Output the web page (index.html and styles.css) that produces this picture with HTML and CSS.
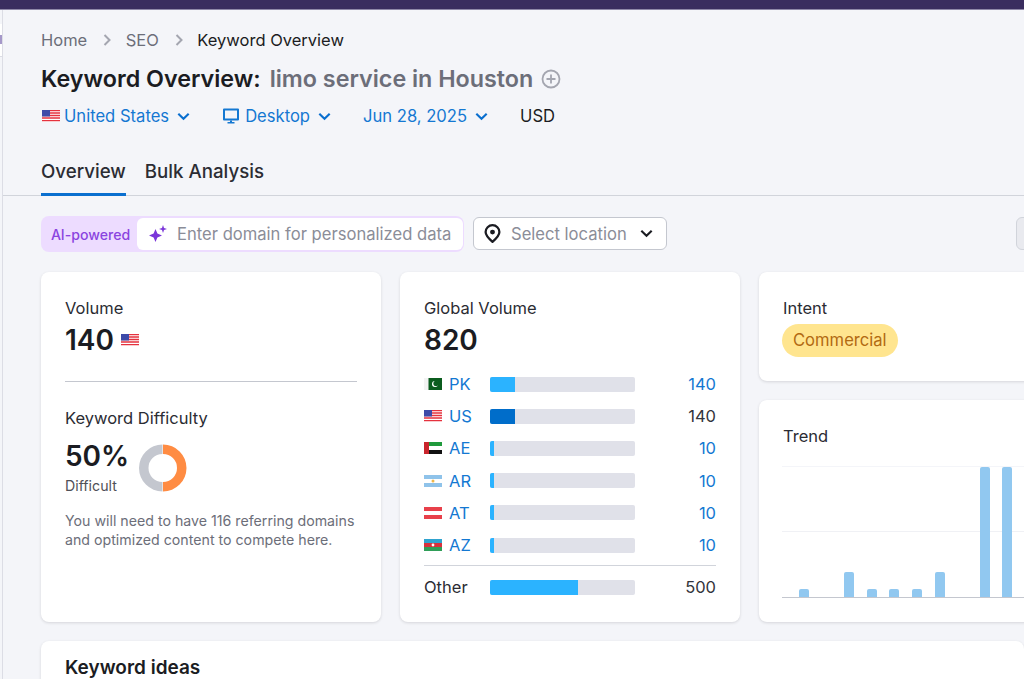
FILE: index.html
```html
<!DOCTYPE html>
<html lang="en">
<head>
    <meta charset="UTF-8">
    <meta name="viewport" content="width=device-width, initial-scale=1.0">
    <title>Keyword Overview</title>
    <link rel="stylesheet" href="styles.css">
</head>
<body>
    <div class="topbar"></div>
    <div class="layout">
        <div class="sidebar"><div class="side-tab"><div class="side-mark"></div></div></div>
        <div class="main">
            <header class="page-head">
                <nav class="crumbs">
                    <span>Home</span>
                    <svg class="crumb-sep" viewBox="0 0 10 14"><path d="M2.5 2l5 5-5 5" fill="none" stroke="currentColor" stroke-width="2"/></svg>
                    <span>SEO</span>
                    <svg class="crumb-sep" viewBox="0 0 10 14"><path d="M2.5 2l5 5-5 5" fill="none" stroke="currentColor" stroke-width="2"/></svg>
                    <span class="crumb-current">Keyword Overview</span>
                </nav>
                <h1 class="title">Keyword Overview: <span class="title-kw">limo service in Houston</span>
                    <svg class="title-add" viewBox="0 0 20 20"><circle cx="10" cy="10" r="8.5" fill="none" stroke="currentColor" stroke-width="1.8"/><path d="M10 5.5v9M5.5 10h9" stroke="currentColor" stroke-width="1.8"/></svg>
                </h1>
                <div class="filters">
                    <span class="filter">
                        <svg class="flag" viewBox="0 0 18 12"><use href="#flag-us"/></svg>
                        United States
                        <svg class="chev" viewBox="0 0 12 8"><path d="M1.2 1.5L6 6l4.8-4.5" fill="none" stroke="currentColor" stroke-width="2"/></svg>
                    </span>
                    <span class="filter">
                        <svg class="desktop" viewBox="0 0 18 18"><path d="M2 1.500h14a1 1 0 0 1 1 1v10a1 1 0 0 1-1 1H2a1 1 0 0 1-1-1v-10a1 1 0 0 1 1-1zm1 2v8h12v-8H3z" fill="currentColor" fill-rule="evenodd"/><path d="M8 13.500h2v1.500h2.500v1.500h-7V15H8z" fill="currentColor"/></svg>
                        Desktop
                        <svg class="chev" viewBox="0 0 12 8"><path d="M1.2 1.5L6 6l4.8-4.5" fill="none" stroke="currentColor" stroke-width="2"/></svg>
                    </span>
                    <span class="filter">
                        Jun 28, 2025
                        <svg class="chev" viewBox="0 0 12 8"><path d="M1.2 1.5L6 6l4.8-4.5" fill="none" stroke="currentColor" stroke-width="2"/></svg>
                    </span>
                    <span class="currency">USD</span>
                </div>
                <div class="tabs">
                    <span class="tab tab-active">Overview</span>
                    <span class="tab">Bulk Analysis</span>
                </div>
            </header>

            <div class="toolbar">
                <div class="ai-box">
                    <span class="ai-label">AI-powered</span>
                    <div class="ai-input">
                        <svg class="sparkle" viewBox="0 0 18 18"><path d="M6.500 4l1.900 4.600L13 10.500l-4.600 1.900L6.500 17l-1.900-4.600L0 10.500l4.600-1.900z" fill="#7b36d9"/><path d="M14 0l1 3 3 1-3 1-1 3-1-3-3-1 3-1z" fill="#7b36d9"/></svg>
                        <span>Enter domain for personalized data</span>
                    </div>
                </div>
                <div class="location">
                    <svg class="pin" viewBox="0 0 18 20"><path d="M9 1.200a7.300 7.300 0 0 1 7.300 7.300c0 3.600-3 6.700-7.300 10.300C4.700 15.200 1.700 12.100 1.700 8.500A7.300 7.300 0 0 1 9 1.200z" fill="none" stroke="#1b1c22" stroke-width="2.400"/><circle cx="9" cy="8.500" r="2.600" fill="#1b1c22"/></svg>
                    <span>Select location</span>
                    <svg class="chev chev-dark" viewBox="0 0 12 8"><path d="M1.2 1.500L6 6l4.800-4.500" fill="none" stroke="currentColor" stroke-width="2"/></svg>
                </div>
                <div class="toolbar-btn"></div>
            </div>

            <div class="cards">
                <section class="card card-volume">
                    <div class="label">Volume</div>
                    <div class="big">140 <svg class="flag" viewBox="0 0 18 12"><use href="#flag-us"/></svg></div>
                    <hr class="rule">
                    <div class="label kd-label">Keyword Difficulty</div>
                    <div class="kd-row">
                        <div>
                            <div class="big">50%</div>
                            <div class="kd-level">Difficult</div>
                        </div>
                        <svg class="donut" viewBox="0 0 48 48">
                            <path d="M23.500 0.500a23.500 23.500 0 0 0 0 47v-9.500a14 14 0 0 1 0-28z" fill="#c4c7cf"/>
                            <path d="M24 0.500a23.500 23.500 0 0 1 0 47v-9.500a14 14 0 0 0 0-28z" fill="#ff8c43"/>
                        </svg>
                    </div>
                    <p class="kd-note">You will need to have 116 referring domains and optimized content to compete here.</p>
                </section>

                <section class="card card-global">
                    <div class="label">Global Volume</div>
                    <div class="big">820</div>
                    <div class="countries">
                        <div class="country">
                            <svg class="flag" viewBox="0 0 18 12"><rect width="18" height="12" fill="#0b5c1e"/><rect width="4.500" height="12" fill="#f3f3f3"/><circle cx="11" cy="6" r="3" fill="#fff"/><circle cx="12" cy="5.400" r="2.600" fill="#0b5c1e"/></svg>
                            <span class="code">PK</span>
                            <span class="bar"><span class="fill" style="width: 17%"></span></span>
                            <span class="num">140</span>
                        </div>
                        <div class="country">
                            <svg class="flag" viewBox="0 0 18 12"><use href="#flag-us"/></svg>
                            <span class="code">US</span>
                            <span class="bar"><span class="fill fill-dark" style="width: 17%"></span></span>
                            <span class="num num-plain">140</span>
                        </div>
                        <div class="country">
                            <svg class="flag" viewBox="0 0 18 12"><rect width="18" height="4" fill="#1f9a3c"/><rect y="4" width="18" height="4" fill="#fff"/><rect y="8" width="18" height="4" fill="#111"/><rect width="5" height="12" fill="#c9252c"/></svg>
                            <span class="code">AE</span>
                            <span class="bar"><span class="fill" style="width: 3%"></span></span>
                            <span class="num">10</span>
                        </div>
                        <div class="country">
                            <svg class="flag" viewBox="0 0 18 12"><rect width="18" height="12" fill="#fff"/><rect width="18" height="4" fill="#8fc3ea"/><rect y="8" width="18" height="4" fill="#8fc3ea"/><circle cx="9" cy="6" r="1.500" fill="#eeb84a"/></svg>
                            <span class="code">AR</span>
                            <span class="bar"><span class="fill" style="width: 3%"></span></span>
                            <span class="num">10</span>
                        </div>
                        <div class="country">
                            <svg class="flag" viewBox="0 0 18 12"><rect width="18" height="12" fill="#e8404a"/><rect y="4" width="18" height="4" fill="#fff"/></svg>
                            <span class="code">AT</span>
                            <span class="bar"><span class="fill" style="width: 3%"></span></span>
                            <span class="num">10</span>
                        </div>
                        <div class="country">
                            <svg class="flag" viewBox="0 0 18 12"><rect width="18" height="4" fill="#2fa3cf"/><rect y="4" width="18" height="4" fill="#d8303c"/><rect y="8" width="18" height="4" fill="#2f9e58"/><circle cx="9" cy="6" r="1.400" fill="#fff"/></svg>
                            <span class="code">AZ</span>
                            <span class="bar"><span class="fill" style="width: 3%"></span></span>
                            <span class="num">10</span>
                        </div>
                    </div>
                    <div class="country country-other">
                        <span class="other-name">Other</span>
                        <span class="bar"><span class="fill" style="width: 61%"></span></span>
                        <span class="num num-plain">500</span>
                    </div>
                </section>

                <div class="card-stack">
                    <section class="card card-intent">
                        <div class="label">Intent</div>
                        <span class="intent-pill">Commercial</span>
                    </section>
                    <section class="card card-trend">
                        <div class="label">Trend</div>
                        <div class="chart">
                            <div class="chart-line"></div>
                            <div class="chart-bars">
                                <span class="chart-bar" style="height: 8px"></span>
                                <span class="chart-bar" style="height: 0"></span>
                                <span class="chart-bar" style="height: 25px"></span>
                                <span class="chart-bar" style="height: 8px"></span>
                                <span class="chart-bar" style="height: 8px"></span>
                                <span class="chart-bar" style="height: 8px"></span>
                                <span class="chart-bar" style="height: 25px"></span>
                                <span class="chart-bar" style="height: 0"></span>
                                <span class="chart-bar" style="height: 130px"></span>
                                <span class="chart-bar" style="height: 130px"></span>
                            </div>
                        </div>
                    </section>
                </div>
            </div>

            <section class="card card-ideas">
                <h2 class="ideas-title">Keyword ideas</h2>
            </section>
        </div>
    </div>

    <svg class="defs" width="0" height="0">
        <defs>
            <g id="flag-us">
                <rect width="18" height="12" fill="#fff"/>
                <path d="M0 .5h18M0 3h18M0 5.500h18M0 8h18M0 10.700h18" stroke="#e5323e" stroke-width="1.300"/>
                <rect width="8" height="6.500" fill="#3d4aa8"/>
            </g>
        </defs>
    </svg>
</body>
</html>
```

FILE: styles.css
```css
html, body {
    margin: 0;
    height: 679px;
    overflow: hidden;
}
body {
    font-family: Inter, "Liberation Sans", sans-serif;
    background-color: #f4f5f9;
    color: #1b1c22;
}
.defs {
    display: block;
    height: 0;
}
.topbar {
    height: 9px;
    background-color: #3a2d5f;
    border-bottom: 1px solid #8f88a8;
}
.layout {
    display: flex;
    height: 669px;
    overflow: hidden;
}
.sidebar {
    width: 2px;
    flex: none;
    border-right: 1px solid #dcdde5;
    background-color: #f4f5f9;
}
.side-tab {
    height: 33px;
    margin-top: 14px;
    padding-top: 11px;
    box-sizing: border-box;
    background-color: #fff;
    border-bottom: 1px solid #dcdde5;
}
.side-mark {
    height: 9px;
    background-color: #a598c9;
}
.main {
    flex: none;
    width: 1021px;
}

/* header */
.page-head {
    padding: 19px 0 0 38px;
    border-bottom: 1px solid #d1d4db;
}
.crumbs {
    display: flex;
    align-items: center;
    font-size: 16.5px;
    line-height: 22px;
    color: #6c6e79;
}
.crumb-sep {
    width: 10px;
    height: 14px;
    margin: 0 13.5px 0 15px;
    color: #a4a6b0;
}
.crumb-current {
    color: #1b1c22;
}
.title {
    margin: 12px 0 0;
    font-size: 23.3px;
    line-height: 32px;
    font-weight: 600;
    display: flex;
    align-items: center;
    white-space: pre;
}
.title-kw {
    color: #6c6e79;
    margin-left: 3px;
}
.title-add {
    width: 20px;
    height: 20px;
    margin-left: 8px;
    color: #a4a6b0;
}
.filters {
    display: flex;
    align-items: center;
    margin-top: 9px;
    font-size: 16.6px;
    line-height: 24px;
    color: #1478d2;
}
.filter {
    display: flex;
    align-items: center;
    margin-right: 32px;
}
.flag {
    width: 18px;
    height: 12px;
    flex: none;
}
.filter .flag {
    margin: 0 4px 0 1px;
}
.desktop {
    width: 18px;
    height: 18px;
    margin-right: 5px;
}
.chev {
    width: 13px;
    height: 9px;
    margin-left: 8px;
    color: #0a6fcf;
}
.chev-dark {
    color: #1b1c22;
    margin-left: 13px;
}
.currency {
    color: #1b1c22;
}
.tabs {
    display: flex;
    gap: 19px;
    margin-top: 32px;
}
.tab {
    font-size: 18.7px;
    line-height: 24px;
    font-weight: 500;
    color: #2b2c33;
    padding-bottom: 9px;
    margin-bottom: -1px;
    border-bottom: 3px solid transparent;
}
.tab-active {
    border-bottom-color: #0a6fcf;
}

/* toolbar */
.toolbar {
    display: flex;
    align-items: flex-start;
    gap: 9px;
    padding-left: 38px;
    margin-top: 20px;
    height: 36px;
}
.ai-box {
    display: flex;
    align-items: center;
    flex: none;
    width: 423px;
    height: 36px;
    box-sizing: border-box;
    padding: 2px 1px 2px 0;
    background-color: #eddcff;
    border-radius: 8px;
}
.ai-label {
    width: 96px;
    flex: none;
    box-sizing: border-box;
    padding-left: 3px;
    text-align: center;
    font-size: 14.1px;
    font-weight: 500;
    color: #8a44e0;
}
.ai-input {
    flex: 1;
    display: flex;
    align-items: center;
    height: 32px;
    background-color: #fff;
    border-radius: 6px;
    font-size: 16.6px;
    color: #8b8d98;
    white-space: nowrap;
}
.sparkle {
    width: 18px;
    height: 18px;
    margin: 0 10px 0 12px;
}
.location {
    display: flex;
    align-items: center;
    flex: none;
    width: 194px;
    height: 33px;
    margin-top: 1px;
    box-sizing: border-box;
    padding-left: 10px;
    background-color: #fff;
    border: 1px solid #c4c7cf;
    border-radius: 6px;
    font-size: 16.6px;
    color: #8b8d98;
}
.pin {
    width: 17px;
    height: 19px;
    margin-right: 10px;
}
.toolbar-btn {
    width: 40px;
    height: 33px;
    margin-top: 1px;
    box-sizing: border-box;
    margin-left: 340px;
    flex: none;
    background-color: #e9eaef;
    border: 1px solid #d1d4db;
    border-radius: 6px;
}

/* cards */
.cards {
    display: grid;
    grid-template-columns: 340px 340px 340px;
    gap: 19px;
    padding-left: 38px;
    margin-top: 20px;
}
.card {
    background-color: #fff;
    border-radius: 8px;
    box-shadow: 0 1px 3px rgba(27, 28, 34, 0.14);
    box-sizing: border-box;
}
.card-volume, .card-global {
    height: 350px;
    padding: 25px 24px 0;
}
.label {
    font-size: 16.5px;
    line-height: 22px;
    color: #2b2c33;
}
.big {
    display: flex;
    align-items: center;
    gap: 7px;
    margin-top: 3px;
    font-size: 28px;
    line-height: 36px;
    font-weight: 600;
}
.rule {
    margin: 23px 0 0;
    border: none;
    border-top: 1px solid #c4c7cf;
}
.kd-label {
    margin-top: 25px;
}
.kd-row {
    display: flex;
    align-items: flex-start;
    gap: 10px;
    margin-top: 6px;
}
.kd-level {
    font-size: 14.2px;
    line-height: 20px;
    color: #4f5058;
    margin-top: 2px;
}
.donut {
    width: 48px;
    height: 48px;
    margin-top: 9px;
}
.kd-note {
    margin: 15px 0 0;
    font-size: 14.2px;
    line-height: 19px;
    color: #6c6e79;
}
.countries {
    margin-top: 10px;
    padding-bottom: 4px;
    border-bottom: 1px solid #d1d4db;
}
.country {
    display: flex;
    align-items: center;
    height: 32.2px;
    font-size: 16.5px;
}
.code {
    width: 41px;
    flex: none;
    margin-left: 7px;
    color: #1478d2;
}
.bar {
    width: 145px;
    height: 15px;
    flex: none;
    background-color: #e0e1e9;
    border-radius: 2px;
    overflow: hidden;
}
.fill {
    display: block;
    height: 100%;
    background-color: #2bb3ff;
}
.fill-dark {
    background-color: #006dca;
}
.num {
    flex: 1;
    text-align: right;
    color: #1478d2;
}
.num-plain {
    color: #33343c;
}
.country-other {
    margin-top: 5px;
}
.other-name {
    width: 66px;
    flex: none;
    color: #2b2c33;
}
.card-stack {
    display: flex;
    flex-direction: column;
    gap: 19px;
}
.card-intent {
    height: 109px;
    padding: 25px 24px 0;
}
.intent-pill {
    display: inline-block;
    margin: 5px 0 0 -1px;
    padding: 0 11px;
    font-size: 16.6px;
    line-height: 33px;
    color: #b26a12;
    background-color: #ffe58f;
    border-radius: 17px;
}
.card-trend {
    height: 222px;
    padding: 25px 24px 0;
}
.chart {
    position: relative;
    height: 130px;
    margin: 19px 0 0 -1px;
    border-top: 1px solid #f4f5f9;
    border-bottom: 1px solid #c4c7cf;
}
.chart-line {
    position: absolute;
    left: 0;
    right: 0;
    top: 64px;
    border-top: 1px solid #f0f1f5;
}
.chart-bars {
    position: relative;
    display: flex;
    align-items: flex-end;
    gap: 12.6px;
    height: 100%;
    padding-left: 17px;
}
.chart-bar {
    width: 10px;
    background-color: #91c8f0;
    border-radius: 2px 2px 0 0;
}
.card-ideas {
    width: 983px;
    height: 80px;
    margin: 19px 0 0 38px;
    padding: 15px 24px 0;
}
.ideas-title {
    margin: 0;
    font-size: 19px;
    line-height: 24px;
    font-weight: 600;
}
```
